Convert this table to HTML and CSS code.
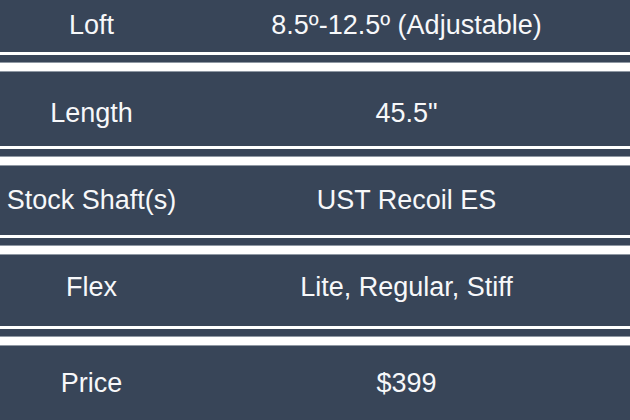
FILE: index.html
```html
<!DOCTYPE html>
<html>
<head>
<meta charset="utf-8">
<link rel="stylesheet" href="styles.css">
</head>
<body>
<div class="specs">
  <div class="row r1"><div class="label">Loft</div><div class="value">8.5º-12.5º (Adjustable)</div></div>
  <div class="sep"><div class="thin"></div><div class="gap"></div><div class="thick"></div></div>
  <div class="row r2"><div class="label">Length</div><div class="value">45.5"</div></div>
  <div class="sep"><div class="thin"></div><div class="gap"></div><div class="thick"></div></div>
  <div class="row r3"><div class="label">Stock Shaft(s)</div><div class="value">UST Recoil ES</div></div>
  <div class="sep"><div class="thin"></div><div class="gap"></div><div class="thick"></div></div>
  <div class="row r4"><div class="label">Flex</div><div class="value">Lite, Regular, Stiff</div></div>
  <div class="sep"><div class="thin"></div><div class="gap"></div><div class="thick"></div></div>
  <div class="row r5"><div class="label">Price</div><div class="value">$399</div></div>
</div>
</body>
</html>
```
FILE: styles.css
```css
html, body {
  margin: 0;
  padding: 0;
  background: #ffffff;
}
body {
  width: 630px;
  height: 420px;
  overflow: hidden;
  font-family: "Liberation Sans", Arial, sans-serif;
}
.specs {
  display: flex;
  flex-direction: column;
}
.row {
  display: grid;
  grid-template-columns: 183px 1fr;
  align-items: center;
  background: #384558;
  color: #f7f8fa;
  font-size: 27px;
  box-sizing: border-box;
}
.label, .value {
  text-align: center;
  white-space: nowrap;
}
.r1 { height: 52px; padding-bottom: 2px; }
.r2 { height: 74px; padding-top: 8px; }
.r3 { height: 69px; }
.r4 { height: 71px; padding-bottom: 6px; }
.r5 { height: 80px; padding-bottom: 6px; }
.sep {
  display: flex;
  flex-direction: column;
}
.thin {
  height: 3px;
  background: #ffffff;
}
.gap {
  height: 7px;
  background: #384558;
}
.thick {
  height: 8px;
  background: #ffffff;
  border-top: 1px solid #8f98a3;
  border-bottom: 1px solid #8f98a3;
}
```
